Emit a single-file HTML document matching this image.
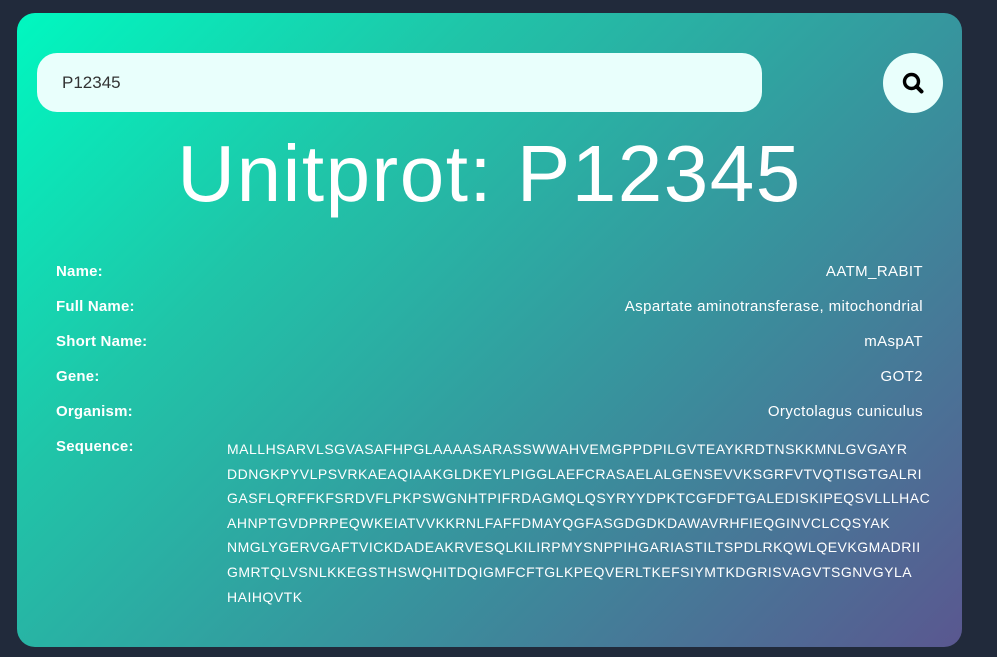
<!DOCTYPE html>
<html><head><style>
body{margin:0;width:997px;height:657px;background:#212a3b;font-family:"Liberation Sans",sans-serif;overflow:hidden;position:relative}
.card{position:absolute;left:17px;top:13px;width:945px;height:634px;border-radius:18px;background:linear-gradient(135deg,#00f8c0 0%,#20c4a8 30%,#3a8e9c 65%,#5a5790 100%)}
.inp{position:absolute;left:20px;top:40px;width:725px;height:59px;border-radius:20px;background:#e9fffc;font-size:17px;color:#333;line-height:59px;padding-left:25px;box-sizing:border-box}
.btn{position:absolute;left:866px;top:40px;width:60px;height:60px;border-radius:50%;background:#e9fffc}
h1{position:absolute;left:0;top:116px;width:945px;margin:0;text-align:center;font-weight:normal;font-size:80px;color:#fff;line-height:90px;letter-spacing:1.5px}
.row{position:absolute;left:39px;width:867px;font-size:15px;color:#fff;height:20px;line-height:20px}
.row b{position:absolute;left:0;letter-spacing:0.2px}
.row span{position:absolute;right:0;letter-spacing:0.4px}
.seq{position:absolute;left:210px;top:424px;font-size:14px;line-height:24.6px;color:#fff;letter-spacing:0.5px;white-space:nowrap}
</style></head><body>
<div class="card">
<div class="inp">P12345</div>
<div class="btn"><svg width="60" height="60" viewBox="0 0 60 60"><circle cx="28.5" cy="28.5" r="7" fill="none" stroke="#000" stroke-width="3.4"/><line x1="33.5" y1="33.5" x2="38.5" y2="38.5" stroke="#000" stroke-width="4" stroke-linecap="round"/></svg></div>
<h1>Unitprot: P12345</h1>
<div class="row" style="top:249px"><b>Name:</b><span>AATM_RABIT</span></div>
<div class="row" style="top:284px"><b>Full Name:</b><span>Aspartate aminotransferase, mitochondrial</span></div>
<div class="row" style="top:319px"><b>Short Name:</b><span>mAspAT</span></div>
<div class="row" style="top:354px"><b>Gene:</b><span>GOT2</span></div>
<div class="row" style="top:389px"><b>Organism:</b><span>Oryctolagus cuniculus</span></div>
<div class="row" style="top:424px"><b>Sequence:</b></div>
<div class="seq">MALLHSARVLSGVASAFHPGLAAAASARASSWWAHVEMGPPDPILGVTEAYKRDTNSKKMNLGVGAYR<br>DDNGKPYVLPSVRKAEAQIAAKGLDKEYLPIGGLAEFCRASAELALGENSEVVKSGRFVTVQTISGTGALRI<br>GASFLQRFFKFSRDVFLPKPSWGNHTPIFRDAGMQLQSYRYYDPKTCGFDFTGALEDISKIPEQSVLLLHAC<br>AHNPTGVDPRPEQWKEIATVVKKRNLFAFFDMAYQGFASGDGDKDAWAVRHFIEQGINVCLCQSYAK<br>NMGLYGERVGAFTVICKDADEAKRVESQLKILIRPMYSNPPIHGARIASTILTSPDLRKQWLQEVKGMADRII<br>GMRTQLVSNLKKEGSTHSWQHITDQIGMFCFTGLKPEQVERLTKEFSIYMTKDGRISVAGVTSGNVGYLA<br>HAIHQVTK</div>
</div>
</body></html>
